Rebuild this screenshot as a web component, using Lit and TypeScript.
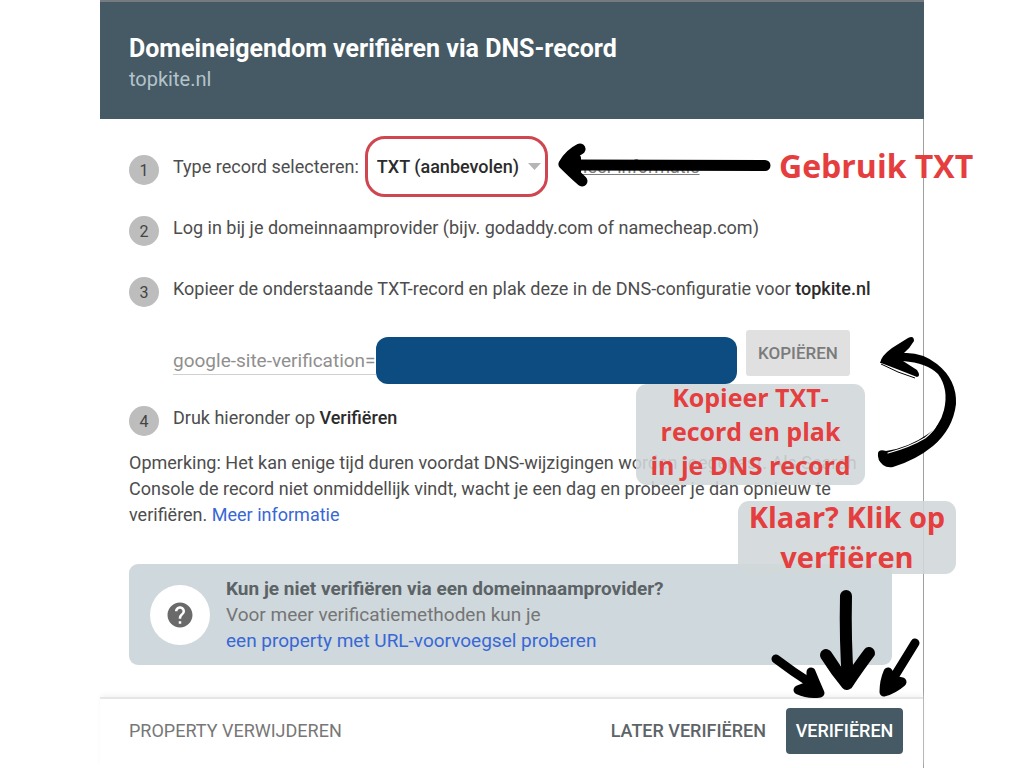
import { LitElement, html, css } from "lit";
import { customElement } from "lit/decorators.js";

@customElement("app-root")
export class AppRoot extends LitElement {
  static styles = css`
    :host {
      display: block;
      min-height: 100vh;
      background: #fff;
      font-family: Roboto, "Liberation Sans", sans-serif;
      font-size: 18px;
      line-height: 26px;
      color: #4d4d4d;
    }
    * {
      box-sizing: border-box;
    }
    .stage {
      position: relative;
      min-height: 100vh;
      padding: 0 100px;
      display: flex;
      overflow: hidden;
    }
    .dialog {
      flex: 1;
      min-width: 0;
      display: flex;
      flex-direction: column;
    }
    .header {
      background: #455a64;
      border-top: 2px solid #757b7e;
      padding: 31px 29px 25px;
    }
    h1 {
      margin: 0;
      font-size: 25px;
      line-height: 32px;
      font-weight: 700;
      color: #fff;
    }
    .domain {
      margin: 0;
      font-size: 20px;
      line-height: 29px;
      color: #b4c3ca;
    }
    .main {
      flex: 1;
      display: flex;
      flex-direction: column;
      border-right: 1px solid #a0a0a0;
    }
    .content {
      flex: 1;
      padding: 17px 31px 22px 29px;
    }
    ol {
      list-style: none;
      margin: 0;
      padding: 0;
    }
    .step {
      display: flex;
      align-items: center;
      height: 61px;
      white-space: nowrap;
    }
    .num {
      flex: none;
      width: 30px;
      height: 30px;
      margin: 6px 14px 0 0;
      border-radius: 50%;
      background: #bdbdbd;
      color: #444;
      font-size: 16px;
      line-height: 32px;
      text-align: center;
    }
    b {
      font-weight: 500;
      color: #2b2b2b;
    }
    .pick {
      display: flex;
      align-items: center;
      position: relative;
      width: 183px;
      height: 61px;
      margin: 0 24px 0 6px;
      border: 3px solid #cf4650;
      border-radius: 20px;
    }
    .pick select {
      appearance: none;
      width: 100%;
      height: 100%;
      padding: 0 0 0 9px;
      border: 0;
      background: none;
      font: inherit;
      font-weight: 500;
      color: #2b2b2b;
    }
    .caret {
      position: absolute;
      right: 4px;
      width: 13px;
      height: 7px;
      fill: #b5b5b5;
      pointer-events: none;
    }
    .more {
      color: #7d7d7d;
      text-decoration: underline;
    }
    .record {
      display: flex;
      align-items: flex-start;
      margin: 11px 42px 0 44px;
      height: 57px;
    }
    .key {
      margin-top: 18px;
      border-bottom: 1px solid #d0d0d0;
      color: #8f8f8f;
      font-size: 19px;
      white-space: nowrap;
    }
    .secret {
      flex: 1;
      height: 47px;
      margin: 7px 9px 0 0;
      border-radius: 12px;
      background: #0d4c80;
    }
    button {
      border: 0;
      background: none;
      padding: 0;
      font: inherit;
      font-weight: 500;
      white-space: nowrap;
      color: #5d6468;
    }
    .copy {
      width: 104px;
      height: 46px;
      border-radius: 3px;
      background: #e0e0e0;
      color: #7b7b7b;
      font-size: 17px;
    }
    .note {
      margin: 2px 0 0;
    }
    a {
      color: #3867d6;
      text-decoration: none;
    }
    .hint {
      display: flex;
      align-items: center;
      margin-top: 36px;
      padding: 12px 20px 11px 21px;
      border-radius: 9px;
      background: #cfd8dc;
      color: #757575;
      font-size: 19px;
    }
    .badge {
      flex: none;
      display: grid;
      place-items: center;
      width: 60px;
      height: 60px;
      margin-right: 16px;
      border-radius: 50%;
      background: #fff;
    }
    .badge svg {
      width: 30px;
      height: 30px;
      fill: #6a6a6a;
    }
    .hint p {
      margin: 0;
    }
    .hint b {
      font-weight: 700;
      color: #5c6366;
    }
    .footer {
      display: flex;
      align-items: center;
      gap: 20px;
      height: 71px;
      padding: 0 20px 6px 29px;
      border-top: 2px solid #e6e6e6;
      box-shadow: 0 -3px 5px -1px #f3f3f3;
    }
    .remove {
      margin-right: auto;
      font-weight: 400;
      color: #777;
    }
    .verify {
      width: 117px;
      height: 46px;
      border-radius: 4px;
      background: #455a64;
      color: #fff;
    }
    .mark {
      position: absolute;
      margin: 0;
      font-family: "Open Sans", sans-serif;
      font-weight: 700;
      color: #e53e3f;
      text-align: center;
      white-space: nowrap;
    }
    .use {
      left: 779px;
      top: 144px;
      font-size: 32px;
      line-height: 44px;
    }
    .paste,
    .done {
      display: flex;
      align-items: center;
      justify-content: center;
      background: #d0d7d9e0;
      border-radius: 11px;
    }
    .paste {
      left: 636px;
      top: 384px;
      width: 229px;
      height: 101px;
      padding-bottom: 7px;
      font-size: 25px;
      line-height: 34px;
    }
    .done {
      left: 738px;
      top: 501px;
      width: 218px;
      height: 73px;
      padding-bottom: 2px;
      font-size: 29px;
      line-height: 40px;
    }
    .arrows {
      position: absolute;
      left: 0;
      top: 0;
      width: 1024px;
      height: 768px;
      pointer-events: none;
    }
    .stroke {
      fill: none;
      stroke: #000;
      stroke-linecap: round;
      stroke-linejoin: round;
    }
    .scratch {
      fill: none;
      stroke: #fff;
      stroke-width: 1.2;
      stroke-linecap: round;
    }
  `;

  render() {
    return html`
      <div class="stage">
        <section class="dialog">
          <header class="header">
            <h1>Domeineigendom verifiëren via DNS-record</h1>
            <p class="domain">topkite.nl</p>
          </header>
          <div class="main">
            <div class="content">
              <ol>
                <li class="step">
                  <span class="num">1</span>
                  <label for="type">Type record selecteren:</label>
                  <span class="pick">
                    <select id="type">
                      <option>TXT (aanbevolen)</option>
                    </select>
                    <svg class="caret" viewBox="0 0 13 7"><path d="M0 0h13L6.500 7z" /></svg>
                  </span>
                  <a class="more" href="#">Meer informatie</a>
                </li>
                <li class="step">
                  <span class="num">2</span>
                  <span>Log in bij je domeinnaamprovider (bijv. godaddy.com of namecheap.com)</span>
                </li>
                <li>
                  <div class="step">
                    <span class="num">3</span>
                    <span>Kopieer de onderstaande TXT-record en plak deze in de DNS-configuratie voor <b>topkite.nl</b></span>
                  </div>
                  <div class="record">
                    <span class="key">google-site-verification=</span>
                    <span class="secret"></span>
                    <button class="copy">KOPIËREN</button>
                  </div>
                </li>
                <li class="step">
                  <span class="num">4</span>
                  <span>Druk hieronder op <b>Verifiëren</b></span>
                </li>
              </ol>
              <p class="note">
                Opmerking: Het kan enige tijd duren voordat DNS-wijzigingen worden toegepast. Als Search
                Console de record niet onmiddellijk vindt, wacht je een dag en probeer je dan opnieuw te
                verifiëren. <a href="#">Meer informatie</a>
              </p>
              <div class="hint">
                <span class="badge">
                  <svg viewBox="0 0 24 24">
                    <path d="M12 2C6.480 2 2 6.480 2 12s4.480 10 10 10 10-4.480 10-10S17.520 2 12 2zm1 17h-2v-2h2v2zm2.070-7.750l-.9.920C13.450 12.900 13 13.500 13 15h-2v-.5c0-1.100.450-2.100 1.170-2.830l1.240-1.260c.370-.360.590-.860.590-1.410 0-1.100-.9-2-2-2s-2 .9-2 2H8c0-2.210 1.790-4 4-4s4 1.790 4 4c0 .880-.360 1.680-.930 2.250z" />
                  </svg>
                </span>
                <div>
                  <p><b>Kun je niet verifiëren via een domeinnaamprovider?</b></p>
                  <p>Voor meer verificatiemethoden kun je</p>
                  <p><a href="#">een property met URL-voorvoegsel proberen</a></p>
                </div>
              </div>
            </div>
            <footer class="footer">
              <button class="remove">PROPERTY VERWIJDEREN</button>
              <button>LATER VERIFIËREN</button>
              <button class="verify">VERIFIËREN</button>
            </footer>
          </div>
        </section>

        <p class="mark use">Gebruik TXT</p>
        <p class="mark paste">Kopieer TXT-<br />record en plak<br />in je DNS record</p>
        <p class="mark done">Klaar? Klik op<br />verfiëren</p>
        <svg class="arrows" viewBox="0 0 1024 768" aria-hidden="true">
          <g class="stroke">
            <path stroke-width="11" d="M765 165.500L572 165" />
            <path stroke-width="11" d="M580 149Q570 154 564 164Q571 171 582 181" />
            <path fill="#000" stroke-width="8" d="M567 164L577 158L577 171Z" />
            <path stroke-width="12" d="M846 596Q845 640 848 682" />
            <path stroke-width="12" d="M826 655Q836 671 847 684Q860 665 869 653" />
            <path stroke-width="9" d="M776 659Q793 672 812 684" />
            <path fill="#000" stroke-width="9" d="M811 672Q815 682 820 693Q809 695 798 690L811 685Z" />
            <path stroke-width="9" d="M915 643Q904 661 891 682" />
            <path fill="#000" stroke-width="9" d="M888 672Q884 681 884 692Q894 689 902 682L893 680Z" />
          </g>
          <path d="M880 363Q881 356 892 348L908 338Q914 335 914 341Q910 348 904 353Q922 352 937 364Q957 380 956 404Q953 429 933 446Q916 460 893 467Q887 468 883 465Q877 460 878 453Q879 449 886 451Q908 448 928 434Q940 426 944 410Q949 389 938 374Q927 363 903 361L917 370Q921 376 917 377Q897 369 881 363Z" />
          <path class="scratch" d="M888 453Q910 447 925 438Q934 431 937 424" />
          <path fill="none" stroke="#000" stroke-width="1" d="M881 364Q898 373 915 378" />
        </svg>
      </div>
    `;
  }
}
